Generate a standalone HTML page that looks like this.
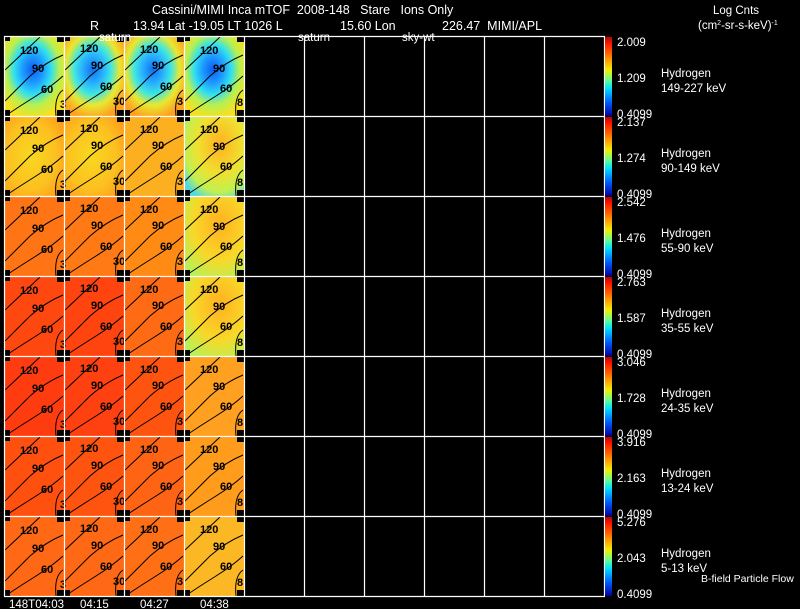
<!DOCTYPE html>
<html><head><meta charset="utf-8"><style>
html,body{margin:0;padding:0;background:#000;width:800px;height:609px;overflow:hidden}
svg{display:block}
text{font-family:"Liberation Sans",sans-serif;white-space:pre}
.w{fill:#fff;font-size:12.5px}
.s{fill:#fff;font-size:11.5px}
.k{fill:#000;font-size:11px;font-weight:bold}
</style></head><body>
<svg width="800" height="609" viewBox="0 0 800 609" xmlns="http://www.w3.org/2000/svg" xml:space="preserve">
<defs>
<radialGradient id="g1" cx="0.48" cy="0.42" r="0.62"><stop offset="0" stop-color="#0a5ef0"/><stop offset="0.28" stop-color="#1e9cff"/><stop offset="0.5" stop-color="#30e0f0"/><stop offset="0.72" stop-color="#b8f050"/><stop offset="1" stop-color="#f8e020"/></radialGradient>
<radialGradient id="g1b" cx="0.48" cy="0.42" r="0.62"><stop offset="0" stop-color="#1070f0"/><stop offset="0.28" stop-color="#28b0ff"/><stop offset="0.5" stop-color="#40e8e0"/><stop offset="0.72" stop-color="#e8e830"/><stop offset="1" stop-color="#ffa020"/></radialGradient>
<radialGradient id="g2" cx="0.45" cy="0.5" r="0.7"><stop offset="0" stop-color="#f8d820"/><stop offset="0.6" stop-color="#fcc020"/><stop offset="1" stop-color="#ff9818"/></radialGradient>
<radialGradient id="g2b" cx="0.6" cy="0.35" r="0.75"><stop offset="0" stop-color="#ffb020"/><stop offset="0.5" stop-color="#f0e030"/><stop offset="0.8" stop-color="#c0f050"/><stop offset="1" stop-color="#50d8e0"/></radialGradient>
<radialGradient id="g3b" cx="0.6" cy="0.35" r="0.75"><stop offset="0" stop-color="#ffb020"/><stop offset="0.6" stop-color="#f8d828"/><stop offset="1" stop-color="#b8f058"/></radialGradient>
<linearGradient id="cb" x1="0" y1="0" x2="0" y2="1"><stop offset="0" stop-color="#c00000"/><stop offset="0.1" stop-color="#ff2000"/><stop offset="0.3" stop-color="#ffa000"/><stop offset="0.42" stop-color="#f0f000"/><stop offset="0.55" stop-color="#60ff90"/><stop offset="0.65" stop-color="#00e0ff"/><stop offset="0.82" stop-color="#0060ff"/><stop offset="1" stop-color="#0000a0"/></linearGradient>
<g id="c" fill="none" stroke="#000" stroke-width="1">
<path d="M1 34 Q18 18 36 1"/>
<path d="M1 65 Q14 52 26 40 Q42 26 59 19"/>
<path d="M1 80 Q16 70 32 60 Q48 50 59 40"/>
<path d="M59 54 Q50 60 52 80"/>
<rect x="0" y="0" width="6" height="5" fill="#000" stroke="none"/>
<rect x="53" y="0" width="7" height="6" fill="#000" stroke="none"/>
<rect x="0" y="74" width="6" height="6" fill="#000" stroke="none"/>
<rect x="53" y="74" width="7" height="6" fill="#000" stroke="none"/>
</g>
</defs>
<rect width="800" height="609" fill="#000"/>
<g>
<rect x="4" y="36" width="60" height="80" fill="url(#g1)"/><rect x="64" y="36" width="60" height="80" fill="url(#g1b)"/><rect x="124" y="36" width="60" height="80" fill="url(#g1b)"/><rect x="184" y="36" width="60" height="80" fill="url(#g1)"/>
<rect x="4" y="116" width="60" height="80" fill="url(#g2)"/><rect x="64" y="116" width="60" height="80" fill="url(#g2)"/><rect x="124" y="116" width="60" height="80" fill="#fcb020"/><rect x="184" y="116" width="60" height="80" fill="url(#g2b)"/>
<rect x="4" y="196" width="60" height="80" fill="#ff7414"/><rect x="64" y="196" width="60" height="80" fill="#ff7a14"/><rect x="124" y="196" width="60" height="80" fill="#ff8a14"/><rect x="184" y="196" width="60" height="80" fill="url(#g3b)"/>
<rect x="4" y="276" width="60" height="80" fill="#ff4810"/><rect x="64" y="276" width="60" height="80" fill="#ff4410"/><rect x="124" y="276" width="60" height="80" fill="#ff6a14"/><rect x="184" y="276" width="60" height="80" fill="url(#g3b)"/>
<rect x="4" y="356" width="60" height="80" fill="#ff3c10"/><rect x="64" y="356" width="60" height="80" fill="#ff4010"/><rect x="124" y="356" width="60" height="80" fill="#ff5410"/><rect x="184" y="356" width="60" height="80" fill="#ffa020"/>
<rect x="4" y="436" width="60" height="80" fill="#ff5010"/><rect x="64" y="436" width="60" height="80" fill="#ff5410"/><rect x="124" y="436" width="60" height="80" fill="#ff6414"/><rect x="184" y="436" width="60" height="80" fill="#ff9c1c"/>
<rect x="4" y="516" width="60" height="80" fill="#ff6814"/><rect x="64" y="516" width="60" height="80" fill="#ff6814"/><rect x="124" y="516" width="60" height="80" fill="#ff7016"/><rect x="184" y="516" width="60" height="80" fill="#fcb824"/>
</g>
<g>
<use href="#c" x="4" y="36"/><use href="#c" x="64" y="36"/><use href="#c" x="124" y="36"/><use href="#c" x="184" y="36"/>
<use href="#c" x="4" y="116"/><use href="#c" x="64" y="116"/><use href="#c" x="124" y="116"/><use href="#c" x="184" y="116"/>
<use href="#c" x="4" y="196"/><use href="#c" x="64" y="196"/><use href="#c" x="124" y="196"/><use href="#c" x="184" y="196"/>
<use href="#c" x="4" y="276"/><use href="#c" x="64" y="276"/><use href="#c" x="124" y="276"/><use href="#c" x="184" y="276"/>
<use href="#c" x="4" y="356"/><use href="#c" x="64" y="356"/><use href="#c" x="124" y="356"/><use href="#c" x="184" y="356"/>
<use href="#c" x="4" y="436"/><use href="#c" x="64" y="436"/><use href="#c" x="124" y="436"/><use href="#c" x="184" y="436"/>
<use href="#c" x="4" y="516"/><use href="#c" x="64" y="516"/><use href="#c" x="124" y="516"/><use href="#c" x="184" y="516"/>
</g>
<g class="k">
<text x="20" y="54">120</text><text x="32" y="72">90</text><text x="41" y="93">60</text><text x="60" y="108">3</text>
<text x="80" y="52">120</text><text x="91" y="69">90</text><text x="100" y="90">60</text><text x="113" y="105">30</text>
<text x="140" y="53">120</text><text x="152" y="69">90</text><text x="160" y="90">60</text><text x="177" y="105">3</text>
<text x="200" y="54">120</text><text x="213" y="72">90</text><text x="220" y="92">60</text><text x="237" y="106">8</text>
<text x="20" y="134">120</text><text x="32" y="152">90</text><text x="41" y="173">60</text><text x="60" y="188">3</text>
<text x="80" y="132">120</text><text x="91" y="149">90</text><text x="100" y="170">60</text><text x="113" y="185">30</text>
<text x="140" y="133">120</text><text x="152" y="149">90</text><text x="160" y="170">60</text><text x="177" y="185">3</text>
<text x="200" y="133">120</text><text x="213" y="150">90</text><text x="220" y="170">60</text><text x="237" y="186">8</text>
<text x="20" y="214">120</text><text x="32" y="232">90</text><text x="41" y="253">60</text><text x="60" y="268">3</text>
<text x="80" y="212">120</text><text x="91" y="229">90</text><text x="100" y="250">60</text><text x="113" y="265">30</text>
<text x="140" y="213">120</text><text x="152" y="229">90</text><text x="160" y="250">60</text><text x="177" y="265">3</text>
<text x="200" y="213">120</text><text x="213" y="230">90</text><text x="220" y="250">60</text><text x="237" y="266">8</text>
<text x="20" y="294">120</text><text x="32" y="312">90</text><text x="41" y="333">60</text><text x="60" y="348">3</text>
<text x="80" y="292">120</text><text x="91" y="309">90</text><text x="100" y="330">60</text><text x="113" y="345">30</text>
<text x="140" y="293">120</text><text x="152" y="309">90</text><text x="160" y="330">60</text><text x="177" y="345">3</text>
<text x="200" y="293">120</text><text x="213" y="310">90</text><text x="220" y="330">60</text><text x="237" y="346">8</text>
<text x="20" y="374">120</text><text x="32" y="392">90</text><text x="41" y="413">60</text><text x="60" y="428">3</text>
<text x="80" y="372">120</text><text x="91" y="389">90</text><text x="100" y="410">60</text><text x="113" y="425">30</text>
<text x="140" y="373">120</text><text x="152" y="389">90</text><text x="160" y="410">60</text><text x="177" y="425">3</text>
<text x="200" y="373">120</text><text x="213" y="390">90</text><text x="220" y="410">60</text><text x="237" y="426">8</text>
<text x="20" y="454">120</text><text x="32" y="472">90</text><text x="41" y="493">60</text><text x="60" y="508">3</text>
<text x="80" y="452">120</text><text x="91" y="469">90</text><text x="100" y="490">60</text><text x="113" y="505">30</text>
<text x="140" y="453">120</text><text x="152" y="469">90</text><text x="160" y="490">60</text><text x="177" y="505">3</text>
<text x="200" y="453">120</text><text x="213" y="470">90</text><text x="220" y="490">60</text><text x="237" y="506">8</text>
<text x="20" y="534">120</text><text x="32" y="552">90</text><text x="41" y="573">60</text><text x="60" y="588">3</text>
<text x="80" y="532">120</text><text x="91" y="549">90</text><text x="100" y="570">60</text><text x="113" y="585">30</text>
<text x="140" y="533">120</text><text x="152" y="549">90</text><text x="160" y="570">60</text><text x="177" y="585">3</text>
<text x="200" y="533">120</text><text x="213" y="550">90</text><text x="220" y="570">60</text><text x="237" y="586">8</text>
</g>
<g stroke="#fff" stroke-width="1.2" fill="none">
<path d="M4.5 36V596M64.5 36V596M124.5 36V596M184.5 36V596M244.5 36V596M304.5 36V596M364.5 36V596M424.5 36V596M484.5 36V596M544.5 36V596M604.5 36V596"/>
<path d="M4 36.5H605M4 116.5H605M4 196.5H605M4 276.5H605M4 356.5H605M4 436.5H605M4 516.5H605M4 596.5H605"/>
</g>
<g>
<rect x="605" y="37" width="7" height="79" fill="url(#cb)"/><rect x="605" y="117" width="7" height="79" fill="url(#cb)"/><rect x="605" y="197" width="7" height="79" fill="url(#cb)"/><rect x="605" y="277" width="7" height="79" fill="url(#cb)"/><rect x="605" y="357" width="7" height="79" fill="url(#cb)"/><rect x="605" y="437" width="7" height="79" fill="url(#cb)"/><rect x="605" y="517" width="7" height="79" fill="url(#cb)"/>
</g>
<g class="s">
<text x="617" y="46">2.009</text><text x="617" y="82">1.209</text><text x="617" y="118">0.4099</text>
<text x="617" y="126">2.137</text><text x="617" y="162">1.274</text><text x="617" y="198">0.4099</text>
<text x="617" y="206">2.542</text><text x="617" y="242">1.476</text><text x="617" y="278">0.4099</text>
<text x="617" y="286">2.763</text><text x="617" y="322">1.587</text><text x="617" y="358">0.4099</text>
<text x="617" y="366">3.046</text><text x="617" y="402">1.728</text><text x="617" y="438">0.4099</text>
<text x="617" y="446">3.916</text><text x="617" y="482">2.163</text><text x="617" y="518">0.4099</text>
<text x="617" y="526">5.276</text><text x="617" y="562">2.043</text><text x="617" y="598">0.4099</text>
</g>
<g class="s">
<text x="661" y="77">Hydrogen</text><text x="661" y="92">149-227 keV</text>
<text x="661" y="157">Hydrogen</text><text x="661" y="172">90-149 keV</text>
<text x="661" y="237">Hydrogen</text><text x="661" y="252">55-90 keV</text>
<text x="661" y="317">Hydrogen</text><text x="661" y="332">35-55 keV</text>
<text x="661" y="397">Hydrogen</text><text x="661" y="412">24-35 keV</text>
<text x="661" y="477">Hydrogen</text><text x="661" y="492">13-24 keV</text>
<text x="661" y="557">Hydrogen</text><text x="661" y="572">5-13 keV</text>
<text x="701" y="582" style="font-size:10.5px">B-field Particle Flow</text>
<text x="713" y="14">Log Cnts</text>
<text x="698" y="29">(cm<tspan font-size="7" dy="-4">2</tspan><tspan dy="4">-sr-s-keV)</tspan><tspan font-size="7" dy="-4">-1</tspan></text>
</g>
<g class="w">
<text x="152" y="14">Cassini/MIMI Inca mTOF  2008-148   Stare   Ions Only</text>
<text x="90" y="30">R</text>
<text x="133" y="30">13.94 Lat -19.05 LT 1026 L</text>
<text x="340" y="30">15.60 Lon</text>
<text x="442" y="30">226.47  MIMI/APL</text>
<text x="99" y="41" style="font-size:11.5px">saturn</text>
<text x="298" y="41" style="font-size:11.5px">saturn</text>
<text x="402" y="41" style="font-size:11.5px">sky-wt</text>
</g>
<g class="s">
<text x="9" y="608">148T04:03</text><text x="80" y="608">04:15</text><text x="140" y="608">04:27</text><text x="200" y="608">04:38</text>
</g>
</svg>
</body></html>
